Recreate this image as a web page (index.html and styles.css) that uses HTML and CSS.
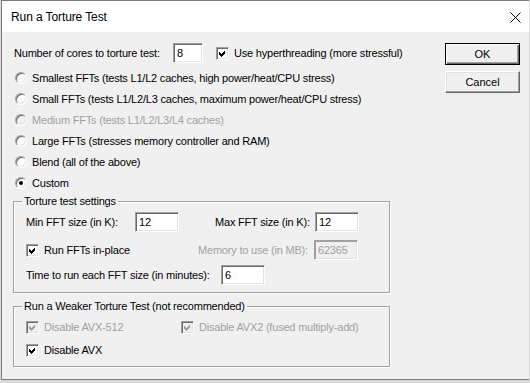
FILE: index.html
```html
<!DOCTYPE html>
<html lang="en">
<head>
    <meta charset="UTF-8">
    <title>Run a Torture Test</title>
    <link rel="stylesheet" href="styles.css">
</head>
<body>

<div class="window">

    <!-- Title bar -->
    <div class="titlebar">
        <span class="title">Run a Torture Test</span>
        <svg class="close" width="11" height="11" viewBox="0 0 11 11">
            <path d="M0.5 0.5 L10.5 10.5 M10.5 0.5 L0.5 10.5" stroke="#000" stroke-width="1" fill="none"/>
        </svg>
    </div>

    <div class="content">
        <div class="main">
            <div class="row first">
                <span class="cores-label">Number of cores to torture test:</span>
                <span class="field cores-field">8</span>
                <span class="opt hyper">
                    <span class="check on"><svg viewBox="0 0 7 7"><path d="M0 2 L2 4 L6 0 L6 3 L2 7 L0 5 Z"/></svg></span>
                    Use hyperthreading (more stressful)
                </span>
            </div>

            <!-- FFT size choices -->
            <div class="radio-row"><span class="radio"></span>Smallest FFTs (tests L1/L2 caches, high power/heat/CPU stress)</div>
            <div class="radio-row"><span class="radio"></span>Small FFTs (tests L1/L2/L3 caches, maximum power/heat/CPU stress)</div>
            <div class="radio-row disabled"><span class="radio"></span>Medium FFTs (tests L1/L2/L3/L4 caches)</div>
            <div class="radio-row"><span class="radio"></span>Large FFTs (stresses memory controller and RAM)</div>
            <div class="radio-row"><span class="radio"></span>Blend (all of the above)</div>
            <div class="radio-row"><span class="radio on"></span>Custom</div>

            <fieldset class="group settings">
                <legend>Torture test settings</legend>
                <div class="row">
                    <span class="min-label">Min FFT size (in K):</span>
                    <span class="field fft-field">12</span>
                    <span class="max-label">Max FFT size (in K):</span>
                    <span class="field fft-field">12</span>
                </div>
                <div class="row gap8">
                    <span class="opt inplace">
                        <span class="check on"><svg viewBox="0 0 7 7"><path d="M0 2 L2 4 L6 0 L6 3 L2 7 L0 5 Z"/></svg></span>
                        Run FFTs in-place
                    </span>
                    <span class="mem-label disabled">Memory to use (in MB):</span>
                    <span class="field fft-field disabled-field">62365</span>
                </div>
                <div class="row gap5">
                    <span class="time-label">Time to run each FFT size (in minutes):</span>
                    <span class="field fft-field">6</span>
                </div>
            </fieldset>

            <fieldset class="group weaker">
                <legend>Run a Weaker Torture Test (not recommended)</legend>
                <div class="row">
                    <span class="opt avx512 disabled">
                        <span class="check on off-state"><svg viewBox="0 0 7 7"><path d="M0 2 L2 4 L6 0 L6 3 L2 7 L0 5 Z"/></svg></span>
                        Disable AVX-512
                    </span>
                    <span class="opt disabled">
                        <span class="check on off-state"><svg viewBox="0 0 7 7"><path d="M0 2 L2 4 L6 0 L6 3 L2 7 L0 5 Z"/></svg></span>
                        Disable AVX2 (fused multiply-add)
                    </span>
                </div>
                <div class="row gap3">
                    <span class="opt">
                        <span class="check on"><svg viewBox="0 0 7 7"><path d="M0 2 L2 4 L6 0 L6 3 L2 7 L0 5 Z"/></svg></span>
                        Disable AVX
                    </span>
                </div>
            </fieldset>
        </div>

        <div class="buttons">
            <button class="btn default">OK</button>
            <button class="btn">Cancel</button>
        </div>
    </div>

</div>

</body>
</html>
```

FILE: styles.css
```css
body {
    margin: 0;
    background: #dadada;
    font-family: "Liberation Sans", Arial, sans-serif;
    font-size: 11px;
    letter-spacing: -0.2px;
    color: #000;
}

.window {
    margin-left: 1px;
    width: 527px;
    height: 378px;
    border: 1px solid #7a7a7a;
    border-right: none;
    background: #f0f0f0;
}

.titlebar {
    height: 31px;
    background: #fff;
    display: flex;
    align-items: center;
    padding-left: 9px;
}

.title {
    font-size: 12px;
    letter-spacing: -0.1px;
    flex: 1;
    padding-top: 1px;
}

.close {
    margin-right: 8px;
    margin-top: 1px;
}

.content {
    display: flex;
    padding-top: 11px;
    padding-left: 11px;
}

.main {
    width: 377px;
    flex-shrink: 0;
}

.buttons {
    margin-left: auto;
    margin-right: 9px;
    display: flex;
    flex-direction: column;
    gap: 6px;
}

/* Generic row */
.row {
    display: flex;
    align-items: center;
    height: 20px;
    white-space: nowrap;
}

.row > * {
    flex-shrink: 0;
}

.row.first {
    padding-left: 1px;
    margin-bottom: 4px;
}

.gap8 { margin-top: 8px; }
.gap5 { margin-top: 5px; }
.gap3 { margin-top: 3px; }

.cores-label { width: 159px; }
.cores-field { width: 30px; }
.hyper { margin-left: 13px; }

/* Sunken edit boxes */
.field {
    box-sizing: border-box;
    height: 20px;
    background: #fff;
    border: 1px solid;
    border-color: #a0a0a0 #fff #fff #a0a0a0;
    box-shadow: inset 1px 1px #696969, inset -1px -1px #e3e3e3;
    padding: 2px 0 0 3px;
    line-height: 14px;
}

.fft-field { width: 44px; }

.disabled-field {
    background: #f0f0f0;
    color: #a0a0a0;
    box-shadow: inset 1px 1px #a0a0a0, inset -1px -1px #e3e3e3;
}

.disabled { color: #a0a0a0; }

/* Radio buttons */
.radio-row {
    display: flex;
    align-items: center;
    height: 21px;
    padding-left: 2px;
    white-space: nowrap;
}

.radio {
    box-sizing: border-box;
    position: relative;
    flex-shrink: 0;
    width: 12px;
    height: 12px;
    border-radius: 50%;
    border: 1px solid;
    border-color: #a0a0a0 #fff #fff #a0a0a0;
    box-shadow: inset 1px 1px #696969, inset -1px -1px #e3e3e3;
    background: #fff;
    margin-right: 5px;
}

.radio-row.disabled .radio { background: #f0f0f0; }

.radio.on::after {
    content: "";
    position: absolute;
    left: 3px;
    top: 3px;
    width: 4px;
    height: 4px;
    border-radius: 50%;
    background: #000;
}

/* Check boxes */
.opt {
    display: flex;
    align-items: center;
}

.check {
    box-sizing: border-box;
    flex-shrink: 0;
    width: 13px;
    height: 13px;
    border: 1px solid;
    border-color: #a0a0a0 #fff #fff #a0a0a0;
    box-shadow: inset 1px 1px #696969, inset -1px -1px #e3e3e3;
    background: #fff;
    margin-right: 5px;
    display: flex;
    align-items: center;
    justify-content: center;
}

.check svg {
    width: 7px;
    height: 7px;
    fill: #000;
    shape-rendering: crispEdges;
}

.check.off-state { background: #f0f0f0; }
.check.off-state svg { fill: #a0a0a0; }

/* Group boxes */
.group {
    margin: 2px 0 0 0;
    padding: 4px 0 7px 12px;
    border: 1px solid #a0a0a0;
    box-shadow: inset 1px 1px #fff, 1px 1px #fff;
    min-inline-size: 0;
}

.group legend {
    margin-left: -4px;
    padding: 0 2px;
    line-height: 13px;
}

.weaker {
    margin-top: 7px;
    padding-bottom: 6px;
}

.min-label { width: 109px; }
.max-label { width: 100px; margin-left: 36px; }
.inplace { width: 172px; }
.mem-label { width: 116px; }
.time-label { width: 195px; }
.avx512 { width: 155px; }

/* Dialog buttons */
.btn {
    box-sizing: border-box;
    width: 75px;
    height: 22px;
    font-family: "Liberation Sans", Arial, sans-serif;
    font-size: 11px;
    background: #f0f0f0;
    border: 1px solid;
    border-color: #fff #696969 #696969 #fff;
    box-shadow: inset -1px -1px #a0a0a0, inset 1px 1px #e3e3e3;
    padding: 0;
}

.btn.default {
    border: 1px solid #000;
    box-shadow: inset 1px 1px #fff, inset -1px -1px #696969, inset -2px -2px #a0a0a0;
}
```
